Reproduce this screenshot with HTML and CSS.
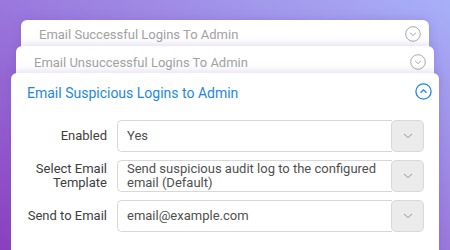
FILE: index.html
```html
<!DOCTYPE html>
<html>
<head>
<meta charset="utf-8">
<link rel="stylesheet" href="styles.css">
</head>
<body>
<div class="stack">
  <div class="card c1">
    <div class="head">
      <span class="title muted">Email Successful Logins To Admin</span>
      <svg class="circ" width="16" height="16" viewBox="0 0 16 16"><circle cx="8" cy="8" r="7.3" fill="none" stroke="#a9a9a9" stroke-width="1"/><path d="M5 6.8 L8 9.6 L11 6.8" fill="none" stroke="#a9a9a9" stroke-width="1"/></svg>
    </div>
  </div>
  <div class="card c2">
    <div class="head">
      <span class="title muted">Email Unsuccessful Logins To Admin</span>
      <svg class="circ" width="16" height="16" viewBox="0 0 16 16"><circle cx="8" cy="8" r="7.3" fill="none" stroke="#a9a9a9" stroke-width="1"/><path d="M5 6.8 L8 9.6 L11 6.8" fill="none" stroke="#a9a9a9" stroke-width="1"/></svg>
    </div>
  </div>
  <div class="card c3">
    <div class="head">
      <span class="title active">Email Suspicious Logins to Admin</span>
      <svg class="circ" width="17" height="17" viewBox="0 0 17 17"><circle cx="8.5" cy="8.5" r="7.6" fill="none" stroke="#1e88e5" stroke-width="1.3"/><path d="M5.5 9.8 L8.5 6.8 L11.5 9.8" fill="none" stroke="#1e88e5" stroke-width="1.3"/></svg>
    </div>
    <div class="form">
      <label class="lbl">Enabled</label>
      <div class="sel"><div class="val">Yes</div><div class="btn"><svg width="10" height="6" viewBox="0 0 10 6"><path d="M1 1 L5 4.6 L9 1" fill="none" stroke="#9a9a9a" stroke-width="1"/></svg></div></div>
      <label class="lbl">Select Email<br>Template</label>
      <div class="sel"><div class="val two">Send suspicious audit log to the configured<br>email (Default)</div><div class="btn"><svg width="10" height="6" viewBox="0 0 10 6"><path d="M1 1 L5 4.6 L9 1" fill="none" stroke="#9a9a9a" stroke-width="1"/></svg></div></div>
      <label class="lbl">Send to Email</label>
      <div class="sel"><div class="val">email@example.com</div><div class="btn"><svg width="10" height="6" viewBox="0 0 10 6"><path d="M1 1 L5 4.6 L9 1" fill="none" stroke="#9a9a9a" stroke-width="1"/></svg></div></div>
    </div>
  </div>
</div>
</body>
</html>
```
FILE: styles.css
```css
html, body {
  margin: 0;
  padding: 0;
}
body {
  width: 450px;
  height: 250px;
  overflow: hidden;
  font-family: Roboto, "Liberation Sans", sans-serif;
  background: linear-gradient(to top right, #8b40c0 0%, #9a78dc 50%, #a8b0f8 100%);
}
.stack {
  padding-top: 20px;
}
.card {
  background: #fff;
  border-radius: 6px;
  box-shadow: 0 0 10px rgba(110, 80, 190, 0.28);
  position: relative;
}
.c1 {
  margin: 0 21px -14px 21px;
  height: 40px;
}
.c2 {
  margin: 0 16px -13px 16px;
  height: 40px;
}
.c3 {
  margin: 0 11px;
  height: 200px;
}
.head {
  display: flex;
  align-items: center;
  justify-content: space-between;
}
.c1 .head {
  height: 28px;
  padding: 0 8px 0 18px;
}
.c2 .head {
  height: 32px;
  padding: 0 8px 0 18px;
}
.c3 .head {
  height: 36px;
  padding: 0 7px 0 16px;
}
.title {
  font-size: 13px;
}
.muted {
  color: #a2a2a2;
}
.active {
  color: #1e88e5;
  font-size: 14px;
  position: relative;
  top: 2px;
}
.circ {
  display: block;
}
.form {
  display: grid;
  grid-template-columns: 86px 1fr;
  column-gap: 10px;
  row-gap: 8px;
  padding: 11px 15px 0 10px;
  align-items: center;
}
.lbl {
  text-align: right;
  font-size: 13px;
  color: #3e3e3e;
  line-height: 14px;
}
.sel {
  display: flex;
  height: 32px;
}
.val {
  flex: 1;
  border: 1px solid #d8d8d8;
  border-right: none;
  border-radius: 5px 0 0 5px;
  font-size: 13px;
  color: #505050;
  padding: 0 9px;
  display: flex;
  align-items: center;
  line-height: 14px;
}
.btn {
  width: 31px;
  background: #ebebeb;
  border: 1px solid #d8d8d8;
  border-radius: 5px;
  display: flex;
  align-items: center;
  justify-content: center;
  margin-left: -1px;
}
```
